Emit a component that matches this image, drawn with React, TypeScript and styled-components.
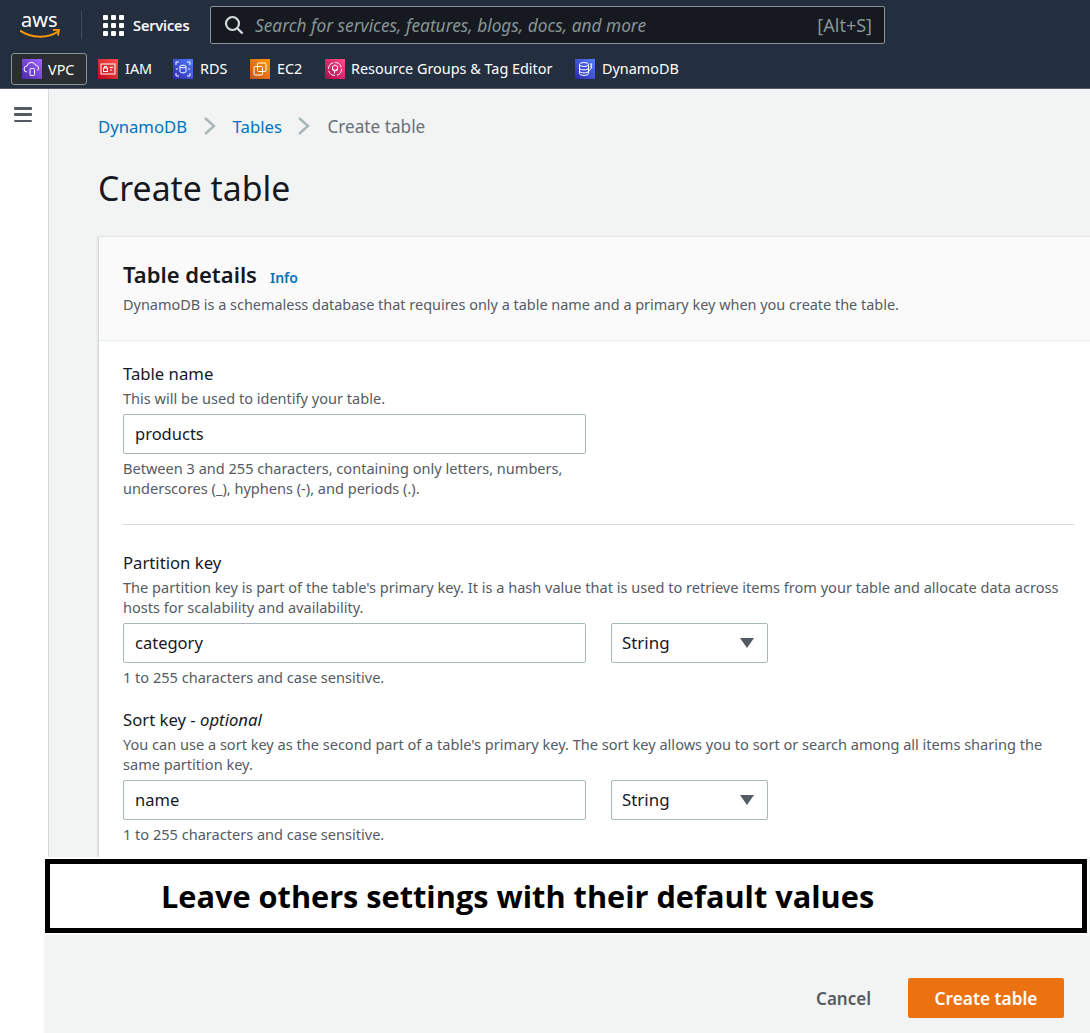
import styled, { createGlobalStyle } from "styled-components";
import { ReactNode } from "react";

const GlobalStyle = createGlobalStyle`
  html, body {
    margin: 0;
    padding: 0;
    background: #fff;
  }
  body {
    font-family: "Noto Sans", "Open Sans", sans-serif;
    color: #16191f;
  }
`;

const Page = styled.div`
  width: 1090px;
  height: 1033px;
  overflow: hidden;
  position: relative;
  background: #fff;
`;

const TopNav = styled.header`
  height: 50px;
  background: #232f3e;
  display: flex;
  align-items: center;
  padding-left: 20px;
`;

const Logo = styled.div`
  width: 44px;
  height: 32px;
  flex: none;
  padding-top: 2px;
  box-sizing: border-box;
  color: #fff;
  font-size: 20px;
  line-height: 18px;
`;

const LogoWord = styled.div`
  padding-left: 1px;
`;

const LogoSmile = styled.svg`
  display: block;
  width: 41px;
  height: 10px;
`;

const NavDivider = styled.span`
  width: 1px;
  height: 28px;
  margin: 0 21px 0 17px;
  background: #414d5c;
`;

const ServicesButton = styled.div`
  display: flex;
  align-items: center;
  gap: 9px;
  width: 107px;
  flex: none;
  color: #fff;
  font-size: 14.5px;
  font-weight: 500;
  -webkit-text-stroke: 0.2px #fff;
`;

const Dots = styled.span`
  display: grid;
  grid-template-columns: repeat(3, 5px);
  gap: 3px;
  & > i {
    width: 5px;
    height: 5px;
    border-radius: 1px;
    background: #fff;
  }
`;

const SearchBox = styled.div`
  width: 675px;
  height: 38px;
  box-sizing: border-box;
  flex: none;
  display: flex;
  align-items: center;
  background: #16191f;
  border: 1px solid #879596;
  border-radius: 2px;
  padding: 0 12px;
  color: #fff;
`;

const SearchText = styled.span`
  margin-left: 10px;
  flex: 1;
  font-style: italic;
  font-size: 17.3px;
  color: #879596;
`;

const Shortcut = styled.span`
  font-size: 18px;
  color: #879596;
`;

const FavBar = styled.nav`
  height: 39px;
  background: #232f3e;
  border-bottom: 1px solid #545b64;
  box-sizing: border-box;
  display: flex;
  align-items: center;
  padding-left: 11px;
`;

const Fav = styled.div<{ $boxed?: boolean; $w: number; $gap?: number }>`
  display: flex;
  align-items: center;
  gap: ${(p) => p.$gap ?? 7}px;
  width: ${(p) => p.$w}px;
  height: 32px;
  box-sizing: border-box;
  flex: none;
  padding-left: ${(p) => (p.$boxed ? 10 : 0)}px;
  padding-bottom: ${(p) => (p.$boxed ? 0 : 1)}px;
  margin-right: ${(p) => (p.$boxed ? 11 : 0)}px;
  background: ${(p) => (p.$boxed ? "#2a2e33" : "transparent")};
  border: ${(p) => (p.$boxed ? "1px solid #879596" : "none")};
  border-radius: 3px;
  color: #fff;
  font-size: 14.4px;
  white-space: nowrap;
`;

const FavIcon = styled.svg`
  width: 20px;
  height: 20px;
  flex: none;
`;

const Body = styled.div`
  display: flex;
  height: 944px;
`;

const SideRail = styled.aside`
  width: 49px;
  flex: none;
  background: #fff;
  border-right: 1px solid #d5dbdb;
  padding: 18px 0 0 14px;
  box-sizing: border-box;
`;

const Burger = styled.div`
  width: 18px;
  height: 15px;
  display: flex;
  flex-direction: column;
  justify-content: space-between;
  & > i {
    height: 2.5px;
    background: #545b64;
    border-radius: 1px;
  }
`;

const Content = styled.main`
  flex: 1;
  min-width: 0;
  background: #f2f3f3;
  padding: 25px 0 0 49px;
  box-sizing: border-box;
`;

const Crumbs = styled.div`
  display: flex;
  align-items: center;
  height: 24px;
  font-size: 16.7px;
`;

const CrumbLink = styled.span`
  color: #0073bb;
`;

const CrumbCurrent = styled.span`
  color: #687078;
  font-size: 17.2px;
`;

const Chevron = styled.svg`
  width: 14px;
  height: 20px;
  margin: 0 16px 0 15.5px;
  flex: none;
`;

const Title = styled.h1`
  margin: 26px 0 0;
  font-size: 33.75px;
  line-height: 48px;
  font-weight: 400;
  color: #16191f;
`;

const Card = styled.section`
  margin-top: 25px;
  background: #fff;
  border-left: 1px solid #d5dbdb;
  box-shadow: 0 0 2px rgba(0, 28, 36, 0.2);
  width: 1000px;
`;

const CardHeader = styled.div`
  height: 104px;
  box-sizing: border-box;
  padding: 23px 24px 0;
  background: #fafafa;
  border-bottom: 1px solid #eaeded;
`;

const HeadingRow = styled.div`
  display: flex;
  align-items: baseline;
  gap: 13px;
`;

const CardTitle = styled.h2`
  margin: 0;
  font-size: 22px;
  line-height: 28px;
  font-weight: 600;
  color: #16191f;
`;

const InfoLink = styled.span`
  font-size: 14px;
  font-weight: 600;
  color: #0073bb;
`;

const HeaderHint = styled.p`
  margin: 7px 0 0;
  font-size: 14.45px;
  line-height: 20px;
  color: #545b64;
  white-space: nowrap;
`;

const CardBody = styled.div`
  padding: 21px 25px 0 24px;
  height: 516px;
  box-sizing: border-box;
`;

const Field = styled.div<{ $gap?: number }>`
  margin-top: ${(p) => p.$gap ?? 0}px;
`;

const Label = styled.div`
  font-size: 16.7px;
  line-height: 24px;
  color: #16191f;
  margin-bottom: 2px;
  & em {
    font-style: italic;
  }
`;

const Description = styled.div`
  font-size: 14.55px;
  line-height: 20px;
  color: #545b64;
  white-space: nowrap;
`;

const Row = styled.div`
  display: flex;
  gap: 25px;
  margin: 6px 0 4px;
`;

const Input = styled.div`
  width: 463px;
  height: 40px;
  box-sizing: border-box;
  border: 1px solid #aab7b8;
  border-radius: 2px;
  padding: 0 0 2px 11px;
  display: flex;
  align-items: center;
  font-size: 16.5px;
  color: #16191f;
`;

const Select = styled(Input)`
  width: 157px;
  padding: 0 13px 2px 10px;
  justify-content: space-between;
  font-size: 16.9px;
`;

const Caret = styled.svg`
  width: 14px;
  height: 10px;
  margin-top: 2px;
`;

const Rule = styled.hr`
  border: 0;
  border-top: 1px solid #d5dbdb;
  margin: 26px 0 26px;
`;

const Banner = styled.div`
  position: absolute;
  left: 45px;
  top: 859px;
  width: 1042px;
  height: 74px;
  box-sizing: border-box;
  border: 5px solid #000;
  background: #fff;
  display: flex;
  align-items: center;
  padding: 0 0 1px 111px;
  font-size: 30.7px;
  font-weight: 700;
  color: #000;
  font-family: "Open Sans", "Noto Sans", sans-serif;
  white-space: nowrap;
  outline: 2px solid #fff;
`;

const Footer = styled.div`
  position: absolute;
  left: 44px;
  right: 0;
  top: 935px;
  height: 98px;
  background: #f2f3f3;
  display: flex;
  justify-content: flex-end;
  align-items: flex-start;
  padding: 43px 26px 0 0;
  box-sizing: border-box;
`;

const CancelButton = styled.span`
  height: 40px;
  display: flex;
  align-items: center;
  margin-right: 37px;
  font-size: 17px;
  font-weight: 600;
  color: #545b64;
`;

const PrimaryButton = styled.span`
  width: 156px;
  height: 40px;
  display: flex;
  align-items: center;
  justify-content: center;
  background: #ec7211;
  border-radius: 2px;
  font-size: 17.3px;
  font-weight: 600;
  color: #fff;
`;

function IconTile({ id, from, to, children }: { id: string; from: string; to: string; children: ReactNode }) {
  return (
    <FavIcon viewBox="0 0 20 20">
      <defs>
        <linearGradient id={id} x1="0" y1="1" x2="1" y2="0">
          <stop offset="0" stopColor={from} />
          <stop offset="1" stopColor={to} />
        </linearGradient>
      </defs>
      <rect width="20" height="20" fill={`url(#${id})`} />
      <g fill="none" stroke="#fff" strokeWidth="1">
        {children}
      </g>
    </FavIcon>
  );
}

function ChevronIcon() {
  return (
    <Chevron viewBox="0 0 14 20">
      <path d="M2 2l9 8-9 8" fill="none" stroke="#aab7b8" strokeWidth="2.4" />
    </Chevron>
  );
}

function CaretIcon() {
  return (
    <Caret viewBox="0 0 14 10">
      <path d="M0 0h14L7 10z" fill="#545b64" />
    </Caret>
  );
}

export default function App() {
  return (
    <Page>
      <GlobalStyle />
      <TopNav>
        <Logo>
          <LogoWord>aws</LogoWord>
          <LogoSmile viewBox="0 0 41 10">
            <path d="M0 1.5c11 8 28 8 38 1" fill="none" stroke="#f90" strokeWidth="2" />
            <path d="M33 1l6-.5-1 6" fill="none" stroke="#f90" strokeWidth="1.8" />
          </LogoSmile>
        </Logo>
        <NavDivider />
        <ServicesButton>
          <Dots>
            {Array.from({ length: 9 }).map((_, i) => (
              <i key={i} />
            ))}
          </Dots>
          Services
        </ServicesButton>
        <SearchBox>
          <svg width="22" height="22" viewBox="0 0 22 22">
            <circle cx="9.5" cy="9.5" r="6.5" fill="none" stroke="#d5dbdb" strokeWidth="2.2" />
            <path d="M14.5 14.5l5 5" stroke="#d5dbdb" strokeWidth="2.4" />
          </svg>
          <SearchText>Search for services, features, blogs, docs, and more</SearchText>
          <Shortcut>[Alt+S]</Shortcut>
        </SearchBox>
      </TopNav>
      <FavBar>
        <Fav $boxed $w={76} $gap={6}>
          <IconTile id="vpc" from="#4d27a8" to="#a166ff">
            <path d="M5 13a3 3 0 0 1 0-6 4.5 4.5 0 0 1 8.5-1 3.2 3.2 0 0 1 2 5.5" />
            <rect x="8" y="9.5" width="4.5" height="7" rx="1" />
          </IconTile>
          VPC
        </Fav>
        <Fav $w={75}>
          <IconTile id="iam" from="#bd0816" to="#ff5252">
            <rect x="3" y="5" width="14" height="10" />
            <rect x="5.5" y="9" width="4" height="3.5" />
            <path d="M6.5 9V7.5h2V9M12 8.5h3M12 11h2" />
          </IconTile>
          IAM
        </Fav>
        <Fav $w={77}>
          <IconTile id="rds" from="#2e27ad" to="#527fff">
            <ellipse cx="10" cy="7.5" rx="3" ry="1.3" />
            <path d="M7 7.5v5c0 1.8 6 1.8 6 0v-5M3 6V3h3M17 6V3h-3M3 14v3h3M17 14v3h-3M3 10h2M15 10h2" />
          </IconTile>
          RDS
        </Fav>
        <Fav $w={75}>
          <IconTile id="ec2" from="#c8511b" to="#ff9900">
            <rect x="7.5" y="4" width="8.5" height="8.5" rx="1" />
            <rect x="4" y="7.5" width="8.5" height="8.5" rx="1" />
          </IconTile>
          EC2
        </Fav>
        <Fav $w={250} $gap={6}>
          <IconTile id="rg" from="#b0084d" to="#ff4f8b">
            <circle cx="10" cy="10" r="6.5" strokeDasharray="8 2" />
            <path d="M10 6l2.5 1.5v2.5L10 11.5 7.5 10V7.5zM7 10.5l2.5 1.5v2.5M13 10.5L10.5 12" />
          </IconTile>
          Resource Groups &amp; Tag Editor
        </Fav>
        <Fav $w={120}>
          <IconTile id="ddb" from="#2e27ad" to="#527fff">
            <ellipse cx="9" cy="5.5" rx="4.5" ry="2" />
            <path d="M4.5 5.5v9c0 2.5 9 2.5 9 0v-9M4.5 9c0 2.5 9 2.5 9 0M4.5 12c0 2.5 9 2.5 9 0M15 5h2l-1.5 3H17l-3 4" />
          </IconTile>
          DynamoDB
        </Fav>
      </FavBar>
      <Body>
        <SideRail>
          <Burger>
            <i />
            <i />
            <i />
          </Burger>
        </SideRail>
        <Content>
          <Crumbs>
            <CrumbLink>DynamoDB</CrumbLink>
            <ChevronIcon />
            <CrumbLink>Tables</CrumbLink>
            <ChevronIcon />
            <CrumbCurrent>Create table</CrumbCurrent>
          </Crumbs>
          <Title>Create table</Title>
          <Card>
            <CardHeader>
              <HeadingRow>
                <CardTitle>Table details</CardTitle>
                <InfoLink>Info</InfoLink>
              </HeadingRow>
              <HeaderHint>
                DynamoDB is a schemaless database that requires only a table name and a primary key when you create the table.
              </HeaderHint>
            </CardHeader>
            <CardBody>
              <Field>
                <Label>Table name</Label>
                <Description>This will be used to identify your table.</Description>
                <Row>
                  <Input>products</Input>
                </Row>
                <Description>
                  Between 3 and 255 characters, containing only letters, numbers,
                  <br />
                  underscores (_), hyphens (-), and periods (.).
                </Description>
              </Field>
              <Rule />
              <Field>
                <Label>Partition key</Label>
                <Description>
                  The partition key is part of the table's primary key. It is a hash value that is used to retrieve items from your table and allocate data across
                  <br />
                  hosts for scalability and availability.
                </Description>
                <Row>
                  <Input>category</Input>
                  <Select>
                    String
                    <CaretIcon />
                  </Select>
                </Row>
                <Description>1 to 255 characters and case sensitive.</Description>
              </Field>
              <Field $gap={21}>
                <Label>
                  Sort key - <em>optional</em>
                </Label>
                <Description>
                  You can use a sort key as the second part of a table's primary key. The sort key allows you to sort or search among all items sharing the
                  <br />
                  same partition key.
                </Description>
                <Row>
                  <Input>name</Input>
                  <Select>
                    String
                    <CaretIcon />
                  </Select>
                </Row>
                <Description>1 to 255 characters and case sensitive.</Description>
              </Field>
            </CardBody>
          </Card>
        </Content>
      </Body>
      <Banner>Leave others settings with their default values</Banner>
      <Footer>
        <CancelButton>Cancel</CancelButton>
        <PrimaryButton>Create table</PrimaryButton>
      </Footer>
    </Page>
  );
}
